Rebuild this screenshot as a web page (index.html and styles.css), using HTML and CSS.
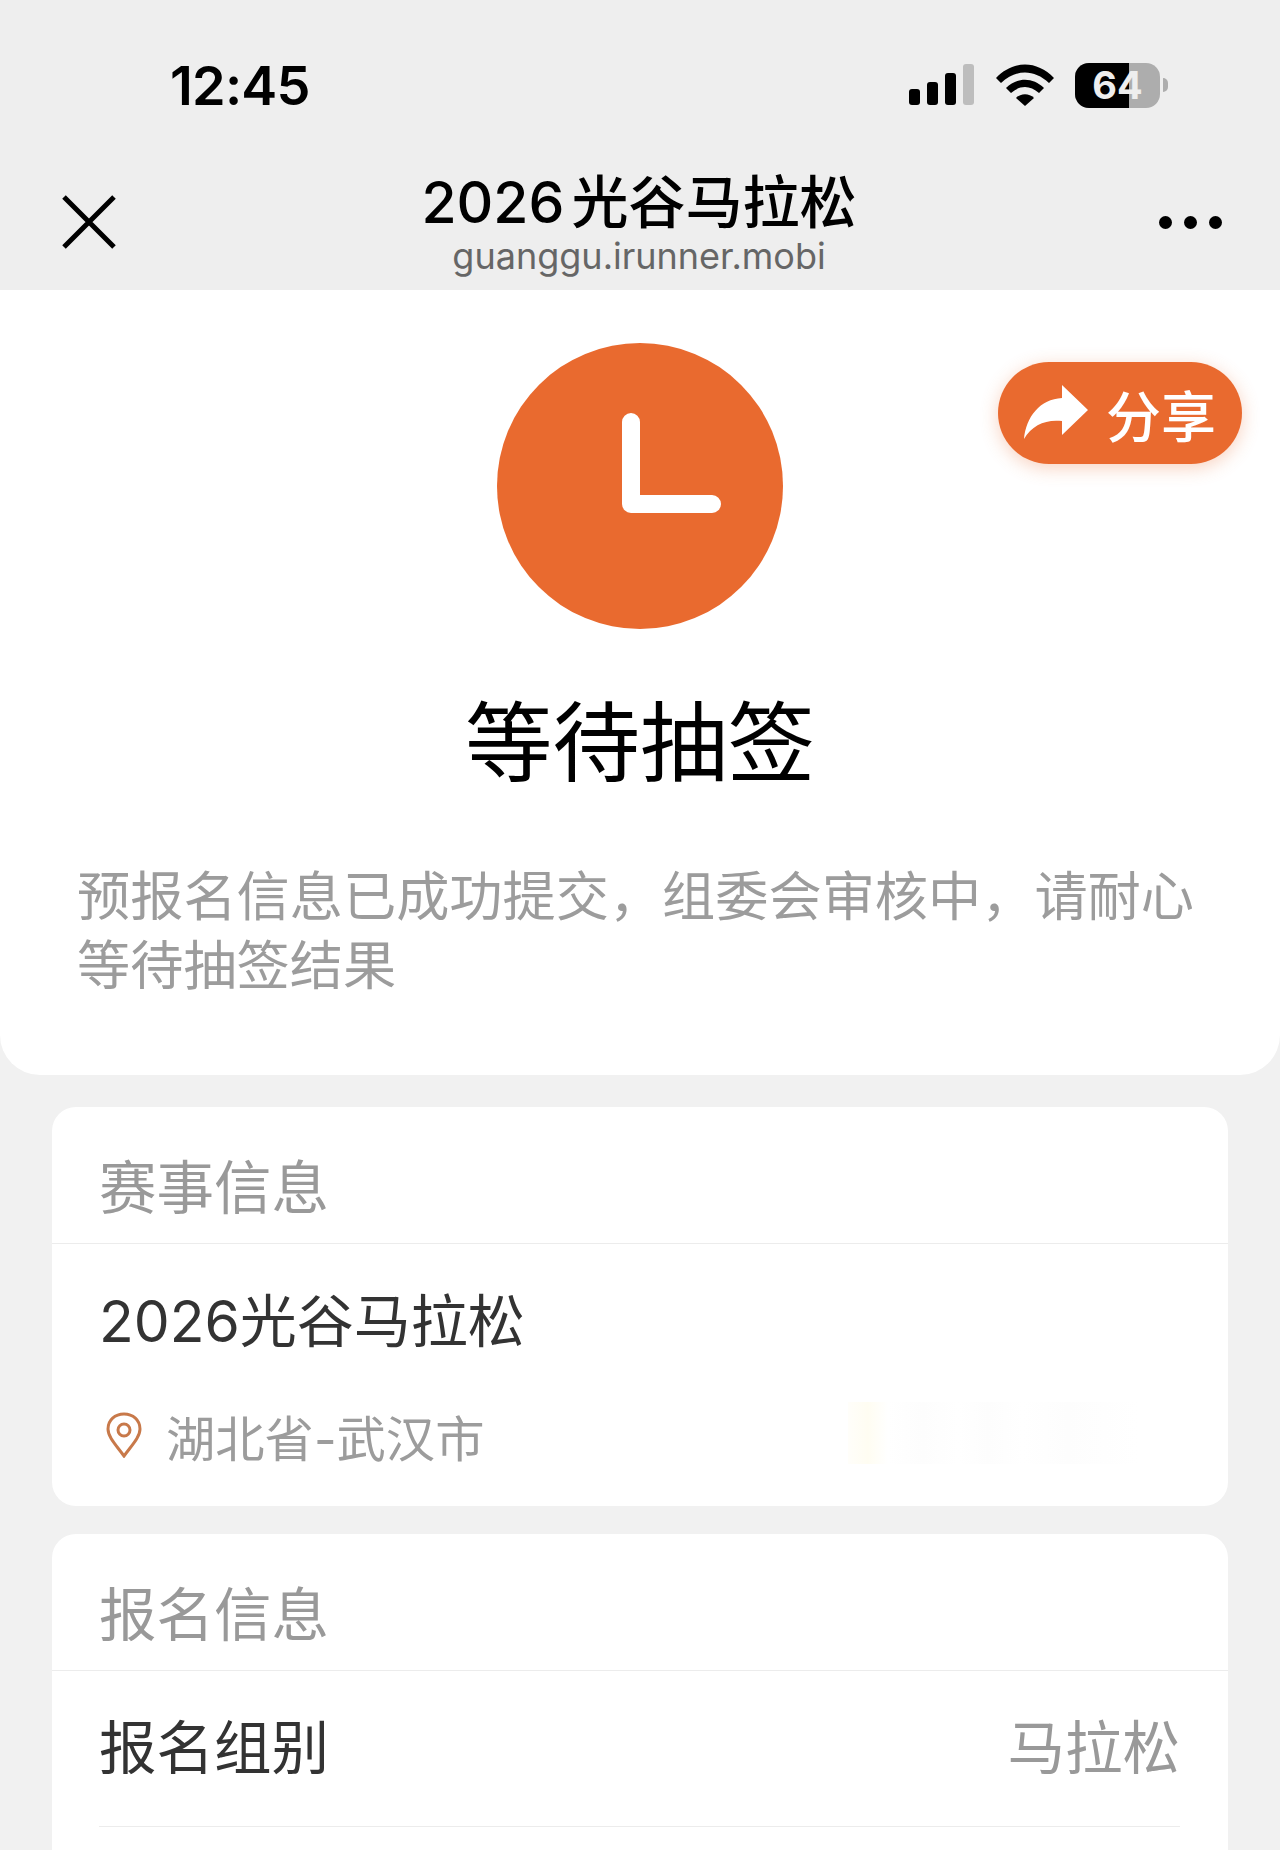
FILE: index.html
```html
<!DOCTYPE html>
<html lang="zh-CN">
<head>
    <meta charset="UTF-8">
    <title>2026 光谷马拉松</title>
    <link rel="stylesheet" href="styles.css">
</head>
<body>
    <div class="top">
        <div class="status-bar">
            <div class="time">12:45</div>
            <div class="status-icons">
                <svg class="signal" width="66" height="42" viewBox="0 0 66 42">
                    <rect x="0" y="25" width="11" height="16" rx="3" fill="#000"/>
                    <rect x="18" y="18" width="11" height="23" rx="3" fill="#000"/>
                    <rect x="36" y="9" width="11" height="32" rx="3" fill="#000"/>
                    <rect x="54" y="0" width="11" height="41" rx="3" fill="#bdbdbd"/>
                </svg>
                <svg class="wifi" width="58" height="42" viewBox="0 0 58 42">
                    <path d="M0 14 C17 -4 41 -4 58 14 L53 19 C38 5 20 5 5 19 Z" fill="#000"/>
                    <path d="M10 24 C21 13 37 13 48 24 L43 29 C34 21 24 21 15 29 Z" fill="#000"/>
                    <path d="M20 34 C25 29 33 29 38 34 L29 42 Z" fill="#000"/>
                </svg>
                <div class="battery">
                    <div class="battery-body">
                        <span class="battery-level"></span>
                        <span class="battery-num">64</span>
                    </div>
                    <span class="battery-cap"></span>
                </div>
            </div>
        </div>
        <div class="nav-bar">
            <svg class="close" width="54" height="54" viewBox="0 0 54 54">
                <path d="M2 2 L52 52 M52 2 L2 52" stroke="#000" stroke-width="5" fill="none"/>
            </svg>
            <div class="nav-title">
                <div class="nav-name">2026 光谷马拉松</div>
                <div class="nav-url">guanggu.irunner.mobi</div>
            </div>
            <div class="more">
                <span></span><span></span><span></span>
            </div>
        </div>
    </div>

    <div class="hero">
        <div class="share">
            <svg width="64" height="56" viewBox="0 0 64 56">
                <path d="M38 0 L64 25 L38 50 L38 36 C22 34 8 40 0 54 C2 32 16 14 38 13 Z" fill="#fff"/>
            </svg>
            <span>分享</span>
        </div>
        <div class="clock">
            <svg width="286" height="286" viewBox="0 0 286 286">
                <path d="M134 79 L134 161 L215 161" stroke="#fff" stroke-width="18" stroke-linecap="round" stroke-linejoin="round" fill="none"/>
            </svg>
        </div>
        <h1>等待抽签</h1>
        <p class="desc">预报名信息已成功提交，组委会审核中，请耐心等待抽签结果</p>
    </div>

    <div class="cards">
        <div class="card">
            <div class="card-head">赛事信息</div>
            <div class="event-name">2026光谷马拉松</div>
            <div class="event-place">
                <svg width="36" height="46" viewBox="0 0 36 46">
                    <path d="M18 44 C10 33 2 25 2 17 C2 8 9 2 18 2 C27 2 34 8 34 17 C34 25 26 33 18 44 Z" stroke="#c8794a" stroke-width="3" fill="none"/>
                    <circle cx="18" cy="18" r="6" stroke="#c8794a" stroke-width="3" fill="none"/>
                </svg>
                <span>湖北省-武汉市</span>
                <div class="ghost"></div>
            </div>
        </div>
        <div class="card card-open">
            <div class="card-head">报名信息</div>
            <div class="info-row">
                <span>报名组别</span>
                <span class="info-value">马拉松</span>
            </div>
        </div>
    </div>
</body>
</html>
```

FILE: styles.css
```css
body {
    font-family: "Inter", "Noto Sans CJK SC", sans-serif;
    margin: 0;
    height: 1850px;
    overflow: hidden;
    background-color: #f1f1f1;
}

.top {
    height: 290px;
    background-color: #eeeeee;
}

.status-bar {
    height: 150px;
    padding: 20px 110px 0 170px;
    display: flex;
    justify-content: space-between;
    align-items: center;
    box-sizing: border-box;
}

.time {
    font-size: 54px;
    font-weight: 600;
    color: #000;
    letter-spacing: -0.8px;
}

.status-icons {
    display: flex;
    align-items: center;
    gap: 21px;
}

.battery {
    display: flex;
    align-items: center;
    gap: 3px;
    margin-right: 2px;
}

.battery-body {
    position: relative;
    width: 85px;
    height: 45px;
    border-radius: 14px;
    background-color: #adadad;
    overflow: hidden;
}

.battery-level {
    position: absolute;
    left: 0;
    top: 0;
    bottom: 0;
    width: 54px;
    background-color: #000;
}

.battery-num {
    position: absolute;
    inset: 0;
    text-align: center;
    font-size: 38px;
    line-height: 45px;
    font-weight: 700;
    color: #eeeeee;
}

.battery-cap {
    width: 5px;
    height: 14px;
    border-radius: 0 5px 5px 0;
    background-color: #adadad;
}

.nav-bar {
    height: 140px;
    padding: 0 58px 0 62px;
    display: flex;
    justify-content: space-between;
    align-items: center;
}

.close {
    margin-top: 4px;
}

.nav-title {
    flex: 1;
    text-align: center;
    margin-top: 6px;
    padding-left: 3px;
}

.nav-name {
    font-size: 57px;
    line-height: 66px;
    font-weight: 500;
    word-spacing: -8px;
    color: #000;
}

.nav-url {
    font-size: 36px;
    line-height: 40px;
    color: #666;
}

.more {
    display: flex;
    gap: 12px;
    margin-top: 4px;
}

.more span {
    width: 13px;
    height: 13px;
    border-radius: 50%;
    background-color: #000;
}

.hero {
    position: relative;
    height: 785px;
    background-color: white;
    border-radius: 0 0 40px 40px;
    padding: 53px 77px 0;
    box-sizing: border-box;
}

.share {
    position: absolute;
    top: 72px;
    right: 38px;
    width: 244px;
    height: 102px;
    box-sizing: border-box;
    padding-left: 26px;
    border-radius: 51px;
    background-color: #e96a2f;
    box-shadow: 0 4px 18px rgba(233, 106, 47, 0.3);
    display: flex;
    align-items: center;
    gap: 18px;
    color: white;
    font-size: 55px;
    font-weight: 500;
}

.clock {
    width: 286px;
    height: 286px;
    margin: 0 auto;
    border-radius: 50%;
    background-color: #e96a2f;
}

h1 {
    margin: 58px 0 0;
    font-size: 87.5px;
    line-height: 112px;
    font-weight: 400;
    color: #000;
    text-align: center;
}

.desc {
    margin: 63px 0 0;
    font-size: 53.2px;
    line-height: 69px;
    color: #9c9c9c;
}

.cards {
    padding: 32px 52px 0;
    display: flex;
    flex-direction: column;
    gap: 28px;
}

.card {
    background-color: white;
    border-radius: 24px;
}

.card-open {
    height: 316px;
    border-radius: 24px 24px 0 0;
}

.card-head {
    height: 137px;
    padding: 26px 0 0 47px;
    font-size: 57.5px;
    line-height: 111px;
    color: #999;
    border-bottom: 1px solid #ececec;
    box-sizing: border-box;
}

.event-name {
    padding: 40px 48px 0 47px;
    font-size: 57px;
    line-height: 76px;
    color: #333;
}

.event-place {
    position: relative;
    height: 146px;
    padding: 4px 48px 0 54px;
    box-sizing: border-box;
    display: flex;
    align-items: center;
    gap: 24px;
    font-size: 49.3px;
    color: #9c9c9c;
}

.ghost {
    position: absolute;
    left: 796px;
    top: 42px;
    width: 290px;
    height: 62px;
    background: linear-gradient(90deg, #fffefa 0, #fffdf2 20px, #fff 40px, #fdfdfd 75px, #fff 110px, #fdfdfd 140px, #fff 175px, #fdfdfd 220px, #fff 290px);
}

.info-row {
    margin: 0 48px 0 47px;
    height: 156px;
    padding-bottom: 10px;
    display: flex;
    justify-content: space-between;
    align-items: center;
    font-size: 57.5px;
    color: #333;
    border-bottom: 1px solid #ececec;
    box-sizing: border-box;
}

.info-value {
    color: #999;
}
```
